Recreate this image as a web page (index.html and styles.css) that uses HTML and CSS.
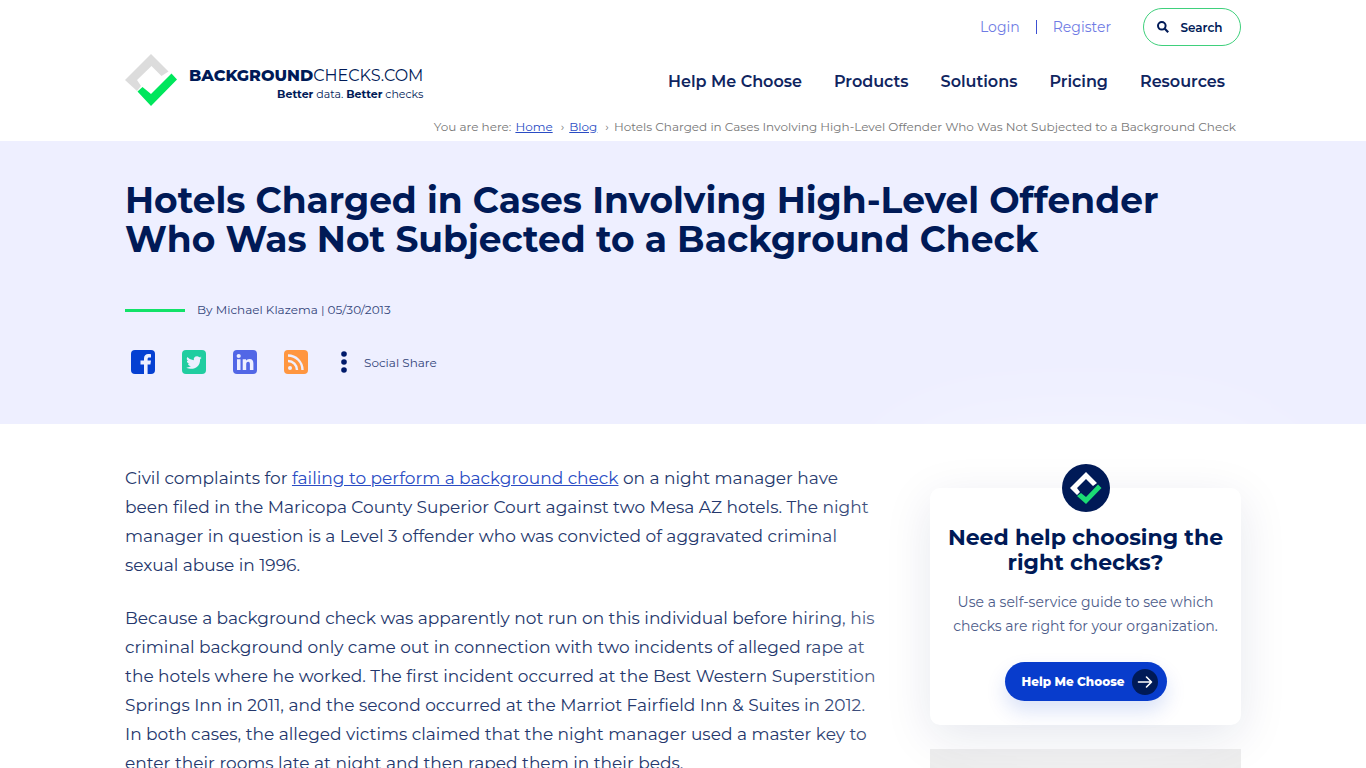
FILE: index.html
```html
<!DOCTYPE html>
<html lang="en">
<head>
    <meta charset="utf-8">
    <meta name="viewport" content="width=device-width, initial-scale=1">
    <title>Hotels Charged in Cases Involving High-Level Offender Who Was Not Subjected to a Background Check</title>
    <link rel="stylesheet" href="styles.css">
</head>
<body>
    <header class="site-header container">
        <div class="top-bar">
            <a class="top-link" href="#">Login</a>
            <a class="top-link register" href="#">Register</a>
            <button class="search-btn" type="button">
                <svg width="12" height="12" viewBox="0 0 12 12" fill="none" stroke="#001a57">
                    <circle cx="4.8" cy="4.8" r="3.8" stroke-width="2"/>
                    <path d="M7.8 7.8l3.4 3.4" stroke-width="2.2"/>
                </svg>
                Search
            </button>
        </div>
        <div class="main-bar">
            <a class="logo" href="#">
                <svg width="52" height="52" viewBox="0 0 52 52">
                    <path fill="#dcdcdc" d="M26 0L0 26l12 11 4-5-4-6 14.500-14 10 10 7-4.500z"/>
                    <path fill="#00e65c" d="M12.500 37.500l5-4.500 8.500 7 20.500-20.500 5.500 6L26 52z"/>
                </svg>
                <span class="logo-text">
                    <span class="logo-name"><b>BACKGROUND</b>CHECKS.COM</span>
                    <span class="logo-tag"><b>Better</b> data. <b>Better</b> checks</span>
                </span>
            </a>
            <nav class="main-nav">
                <a href="#">Help Me Choose</a>
                <a href="#">Products</a>
                <a href="#">Solutions</a>
                <a href="#">Pricing</a>
                <a href="#">Resources</a>
            </nav>
        </div>
        <div class="breadcrumbs">
            <span>You are here:</span>
            <a href="#">Home</a>
            <span class="sep">›</span>
            <a href="#">Blog</a>
            <span class="sep">›</span>
            <span>Hotels Charged in Cases Involving High-Level Offender Who Was Not Subjected to a Background Check</span>
        </div>
    </header>

    <section class="hero">
        <div class="container">
            <h1>Hotels Charged in Cases Involving High-Level Offender Who Was Not Subjected to a Background Check</h1>
            <p class="byline">By Michael Klazema | 05/30/2013</p>
            <div class="social">
                <a href="#" aria-label="Facebook">
                    <svg width="24" height="24" viewBox="0 0 24 24">
                        <rect width="24" height="24" rx="4" fill="#0540d2"/>
                        <path fill="#eeefff" d="M13 24v-9.500H9.500v-4H13V8.500C13 5.600 14.700 4 17.300 4c1.200 0 2.700.2 2.700.2v3.200h-1.700c-1.300 0-1.700.7-1.700 1.600v1.500H20l-.6 4h-2.800V24z"/>
                    </svg>
                </a>
                <a href="#" aria-label="Twitter">
                    <svg width="24" height="24" viewBox="0 0 24 24">
                        <rect width="24" height="24" rx="4" fill="#20cda0"/>
                        <path fill="#eeefff" d="M19.700 7.700c-.6.300-1.200.4-1.800.5.700-.4 1.100-1 1.400-1.700-.6.400-1.300.6-2 .8a3.200 3.200 0 0 0-5.500 2.900A9 9 0 0 1 5.300 6.900a3.200 3.200 0 0 0 1 4.200c-.5 0-1-.2-1.400-.4 0 1.600 1.100 2.900 2.500 3.200-.5.100-1 .1-1.400 0 .4 1.300 1.600 2.200 3 2.200A6.400 6.400 0 0 1 4.300 17.400c5.800 3.600 13.800.4 13.800-7.700v-.4c.6-.4 1.200-1 1.600-1.600z"/>
                    </svg>
                </a>
                <a href="#" aria-label="LinkedIn">
                    <svg width="24" height="24" viewBox="0 0 24 24" fill="#eeefff">
                        <rect width="24" height="24" rx="4" fill="#5267e6"/>
                        <circle cx="5.700" cy="6" r="2.100"/>
                        <path d="M4 9.300h3.500V20H4zM9.700 9.300H13v1.500c.6-1 1.800-1.800 3.400-1.800 3 0 4 1.900 4 4.800V20h-3.500v-5.500c0-1.600-.4-2.700-1.700-2.700-1.500 0-2 1.100-2 2.700V20H9.700z"/>
                    </svg>
                </a>
                <a href="#" aria-label="RSS">
                    <svg width="24" height="24" viewBox="0 0 24 24">
                        <rect width="24" height="24" rx="4" fill="#ff9640"/>
                        <circle cx="6" cy="18" r="2" fill="#eeefff"/>
                        <path fill="none" stroke="#eeefff" stroke-width="2.400" d="M4 11a9 9 0 0 1 9 9M4 5.500A14.500 14.500 0 0 1 18.500 20"/>
                    </svg>
                </a>
                <a class="share" href="#">
                    <svg width="6" height="22" viewBox="0 0 6 22" fill="#001a6b">
                        <circle cx="3" cy="3" r="2.800"/>
                        <circle cx="3" cy="11" r="2.800"/>
                        <circle cx="3" cy="19" r="2.800"/>
                    </svg>
                    Social Share
                </a>
            </div>
        </div>
    </section>

    <div class="content container">
        <main class="article">
            <p>Civil complaints for <a href="#">failing to perform a background check</a> on a night manager have been filed in the Maricopa County Superior Court against two Mesa AZ hotels. The night manager in question is a Level 3 offender who was convicted of aggravated criminal sexual abuse in 1996.</p>
            <p>Because a background check was apparently not run on this individual before hiring, his criminal background only came out in connection with two incidents of alleged rape at the hotels where he worked. The first incident occurred at the Best Western Superstition Springs Inn in 2011, and the second occurred at the Marriot Fairfield Inn &amp; Suites in 2012. In both cases, the alleged victims claimed that the night manager used a master key to enter their rooms late at night and then raped them in their beds.</p>
        </main>
        <aside class="sidebar">
            <div class="help-card">
                <svg class="badge" width="48" height="48" viewBox="0 0 48 48">
                    <circle cx="24" cy="24" r="24" fill="#001a57"/>
                    <path fill="#fff" d="M24 8L8 24l7 7 3-3-3-4 9-9 7 7 4-3z"/>
                    <path fill="#1bdc74" d="M15 32l4-3 5 4 12-12.500 3.500 3.500L24 40z"/>
                </svg>
                <h2>Need help choosing the right checks?</h2>
                <p>Use a self-service guide to see which checks are right for your organization.</p>
                <a class="help-btn" href="#">
                    Help Me Choose
                    <svg width="26" height="26" viewBox="0 0 26 26">
                        <circle cx="13" cy="13" r="13" fill="#001a57"/>
                        <path fill="none" stroke="#fff" stroke-width="1.600" stroke-linecap="round" stroke-linejoin="round" d="M6.500 13h12.500M14.500 8l5 5-5 5"/>
                    </svg>
                </a>
            </div>
            <div class="side-box"></div>
        </aside>
    </div>
</body>
</html>
```

FILE: styles.css
```css
* {
    box-sizing: border-box;
}

body {
    margin: 0;
    font-family: Montserrat, Inter, sans-serif;
    color: #001a57;
    background-color: #fff;
}

svg {
    display: block;
    flex-shrink: 0;
}

.container {
    max-width: 1116px;
    margin: 0 auto;
}

/* header */
.top-bar {
    display: flex;
    justify-content: flex-end;
    align-items: center;
    padding-top: 8px;
}

.top-link {
    color: #6f7be4;
    font-size: 14px;
    font-weight: 400;
    line-height: 14px;
    text-decoration: none;
}

.top-link.register {
    margin: 0 32px 0 16px;
    padding-left: 16px;
    border-left: 1px solid #3c50d2;
}

.search-btn {
    display: flex;
    align-items: center;
    justify-content: center;
    gap: 11px;
    width: 98px;
    height: 38px;
    padding: 0 4px 0 0;
    border: 1px solid #3fd07c;
    border-radius: 19px;
    background-color: #fff;
    color: #001a57;
    font-family: inherit;
    font-size: 12px;
    font-weight: 600;
}

.main-bar {
    display: flex;
    justify-content: space-between;
    align-items: center;
    padding: 8px 16px 0 0;
}

.logo {
    display: flex;
    align-items: center;
    gap: 12px;
    color: #001a57;
    text-decoration: none;
}

.logo-text {
    display: flex;
    flex-direction: column;
    align-items: flex-end;
    padding-top: 8px;
}

.logo-name {
    font-size: 16px;
    line-height: 20px;
}

.logo-name b {
    font-weight: 800;
}

.logo-tag {
    font-size: 11px;
    line-height: 16px;
}

.main-nav {
    display: flex;
    gap: 32px;
    padding-top: 2px;
}

.main-nav a {
    color: #10255f;
    font-size: 16px;
    font-weight: 600;
    text-decoration: none;
}

.breadcrumbs {
    display: flex;
    justify-content: flex-end;
    padding: 13px 5px 6px;
    color: #777;
    font-size: 12px;
    font-weight: 400;
    line-height: 16px;
}

.breadcrumbs a {
    margin-left: 4px;
    color: #2a4cc4;
}

.breadcrumbs .sep {
    margin: 0 5px 0 8px;
}

.breadcrumbs .sep + a {
    margin-left: 0;
}

/* hero */
.hero {
    padding: 40px 0 50px;
    background-color: #eeefff;
}

.hero h1 {
    margin: 0 0 43px;
    font-size: 36px;
    font-weight: 700;
    line-height: 39px;
}

.byline {
    display: flex;
    align-items: center;
    gap: 12px;
    margin: 0 0 32px;
    color: #33457a;
    font-size: 12px;
    font-weight: 400;
    line-height: 16px;
}

.byline::before {
    content: "";
    width: 60px;
    height: 3px;
    background-color: #12e268;
}

.social {
    display: flex;
    align-items: center;
    gap: 27px;
    padding-left: 6px;
}

.share {
    display: flex;
    align-items: center;
    gap: 17px;
    margin-left: 6px;
    color: #33457a;
    font-size: 12px;
    font-weight: 400;
    text-decoration: none;
}

/* article and sidebar */
.content {
    display: flex;
    justify-content: space-between;
    align-items: flex-start;
    gap: 48px;
    padding-top: 40px;
}

.article {
    flex: 1;
    color: #24376c;
    font-size: 17px;
    font-weight: 400;
    line-height: 29px;
}

.article p {
    margin: 0 0 24px;
}

.article a {
    color: #2a4cc4;
}

.sidebar {
    width: 311px;
    padding-top: 24px;
}

.help-card {
    position: relative;
    display: flex;
    flex-direction: column;
    align-items: center;
    padding: 37px 16px 24px;
    border-radius: 10px;
    background-color: #fff;
    box-shadow: 0 12px 48px rgba(0, 26, 87, 0.1), 0 0 140px 20px rgba(255, 255, 255, 0.8);
    text-align: center;
}

.badge {
    position: absolute;
    top: -24px;
}

.help-card h2 {
    margin: 0 0 15px;
    font-size: 22px;
    font-weight: 700;
    line-height: 25px;
}

.help-card p {
    margin: 0 0 24px;
    color: #4d5c8a;
    font-size: 14px;
    font-weight: 400;
    line-height: 24px;
}

.help-btn {
    display: flex;
    align-items: center;
    justify-content: space-between;
    width: 162px;
    height: 39px;
    padding: 0 9px 0 17px;
    border-radius: 20px;
    background-color: #083ccc;
    box-shadow: 0 10px 20px rgba(8, 60, 204, 0.15);
    color: #fff;
    font-size: 12px;
    font-weight: 800;
    text-decoration: none;
}

.side-box {
    height: 300px;
    margin-top: 24px;
    background-color: #eaeaea;
}
```
